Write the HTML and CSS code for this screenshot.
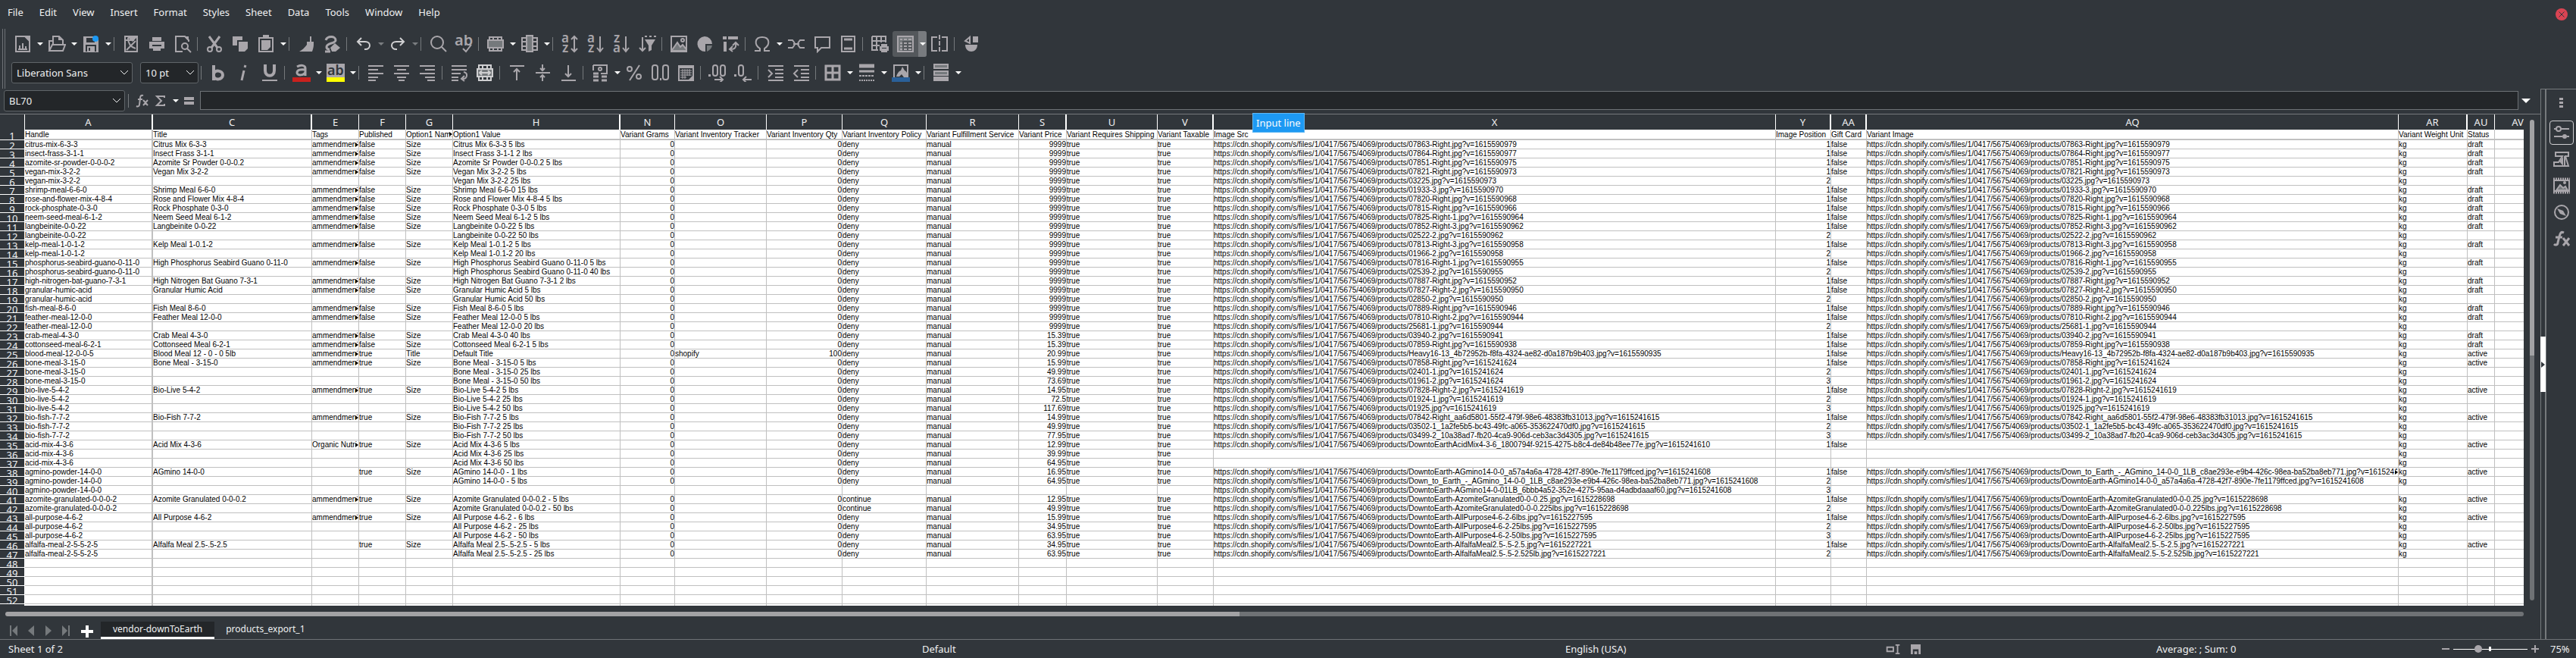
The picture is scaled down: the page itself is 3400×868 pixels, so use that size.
FILE: index.html
```html
<!DOCTYPE html>
<html lang="en">
<head>
<meta charset="utf-8">
<title>Spreadsheet</title>
<link rel="stylesheet" href="styles.css">
</head>
<body>
<div class="app">
  <header class="menubar">
    <nav class="menus" aria-label="Main menu">
      <button class="menu">File</button><button class="menu">Edit</button><button class="menu">View</button><button class="menu">Insert</button><button class="menu">Format</button><button class="menu">Styles</button><button class="menu">Sheet</button><button class="menu">Data</button><button class="menu">Tools</button><button class="menu">Window</button><button class="menu">Help</button>
    </nav>
    <button class="close" aria-label="Close"><svg viewBox="0 0 16 16"><path d="M4.500 4.500l7 7M11.500 4.500l-7 7"/></svg></button>
  </header>

  <section class="toolbars">
    <div class="grip"></div>
    <div class="bars">
      <div class="bar" role="toolbar" aria-label="Standard">
        <button class="tool" aria-label="New"><svg viewBox="0 0 24 24"><path d="M3 2h12l6 6v14H3z"/><path d="M14 1h8v8z" class="f"/><path d="M8 19v-5M12 19v-8M16 19v-4" /><path d="M6 19h12"/></svg></button>
        <button class="drop" aria-label="New options"></button>
        <button class="tool" aria-label="Open"><svg viewBox="0 0 24 24"><path d="M2 20V8h4M7 13V2h8l5 5v6"/><path d="M2 21l4-8h17l-3 8z"/><path d="M14 2h1l5 5h-6z" class="f"/></svg></button>
        <button class="drop" aria-label="Open options"></button>
        <button class="tool" aria-label="Save"><svg viewBox="0 0 24 24"><path class="f" d="M2 2h16l4 4v17H2z"/><path class="bg" d="M6 4h11v6H6zM5 13h14v9H5z"/><path class="f" d="M7 15h10v7H7z"/><path class="bg" d="M9 17h2v4H9z"/><circle cx="18" cy="5" r="4" fill="#1d99f3" stroke="none"/></svg></button>
        <button class="drop" aria-label="Save options"></button>
        <span class="sep"></span>
        <button class="tool" aria-label="Export as PDF"><svg viewBox="0 0 24 24"><path d="M4 2h16v20H4zM5 7h11M8 4c0 8 3 12 10 14M18 8L6 20"/><path class="f" d="M7 3h13L14 9z"/></svg></button>
        <button class="tool" aria-label="Print"><svg viewBox="0 0 24 24"><path class="f" d="M6 3h12v5H6zM2 9h20v9H2z"/><path class="bg" d="M6 13h12v2H6z"/><path class="f" d="M7 15h10v6H7z"/></svg></button>
        <button class="tool" aria-label="Print preview"><svg viewBox="0 0 24 24"><path d="M20 9V7l-5-5H3v20h9"/><path class="f" d="M14 2h6v6z"/><circle cx="15" cy="15" r="4"/><path d="M18 18l5 5"/></svg></button>
        <span class="sep"></span>
        <button class="tool" aria-label="Cut"><svg viewBox="0 0 24 24"><path d="M5 2l11 15M19 2L8 17" stroke-width="3"/><circle cx="6" cy="19" r="3"/><circle cx="18" cy="19" r="3"/></svg></button>
        <button class="tool" aria-label="Copy"><svg viewBox="0 0 24 24"><path class="f" d="M2 2h13v5H8v7H2z"/><path class="f" d="M10 9h12v9l-4 4h-8z"/></svg></button>
        <button class="tool" aria-label="Paste"><svg viewBox="0 0 24 24"><path d="M3 4h18v18H3z"/><path class="f" d="M8 0h8v5H8zM6 7h12v9l-4 4H6z"/></svg></button>
        <button class="drop" aria-label="Paste options"></button>
        <span class="sep"></span>
        <button class="tool" aria-label="Clone formatting"><svg viewBox="0 0 24 24"><path d="M18 2v8"/><path class="f" d="M13 9h9v4c0 3-1 6-2 9H3c4-2 7-5 10-9z"/></svg></button>
        <button class="tool" aria-label="Clear formatting"><svg viewBox="0 0 24 24"><path d="M4 7c2-6 13-6 13 0 0 5-12 3-12 9 0 2 2 3 4 3M3 22h7" stroke-width="3"/><path class="f" d="M10 17l6-6 7 6-6 5h-5z"/></svg></button>
        <span class="sep"></span>
        <button class="tool lit" aria-label="Undo"><svg viewBox="0 0 24 24"><path d="M9 4L4 9l5 5M4 9h10c8 0 8 10 0 10h-1"/></svg></button>
        <button class="drop dim" aria-label="Undo options"></button>
        <button class="tool lit" aria-label="Redo"><svg viewBox="0 0 24 24"><path d="M15 4l5 5-5 5M20 9H10c-8 0-8 10 0 10h1"/></svg></button>
        <button class="drop dim" aria-label="Redo options"></button>
        <span class="sep"></span>
        <button class="tool" aria-label="Find and replace"><svg viewBox="0 0 24 24"><circle cx="11" cy="10" r="8"/><path d="M17 16l6 6"/></svg></button>
        <button class="tool" aria-label="Spelling"><svg viewBox="0 0 24 24"><text x="0" y="14" font-size="20">ab</text><path d="M11 18l4 4 7-9"/></svg></button>
        <span class="sep"></span>
        <button class="tool" aria-label="Rows"><svg viewBox="0 0 24 24"><path d="M4 3h16v18H4zM9 3v18M15 3v18"/><path class="h" d="M2 7h20v10H2z"/></svg></button>
        <button class="drop" aria-label="Row options"></button>
        <button class="tool" aria-label="Columns"><svg viewBox="0 0 24 24"><path d="M2 4h20v16H2zM2 9h20M2 15h20"/><path class="h" d="M8 1h8v21H8z"/></svg></button>
        <button class="drop" aria-label="Column options"></button>
        <span class="sep"></span>
        <button class="tool" aria-label="Sort"><svg viewBox="0 0 24 24"><text x="1" y="10" font-size="17">a</text><text x="2" y="23" font-size="17">z</text><path d="M18 2v20M14 6l4-4 4 4M14 18l4 4 4-4"/></svg></button>
        <button class="tool" aria-label="Sort ascending"><svg viewBox="0 0 24 24"><text x="1" y="10" font-size="17">a</text><text x="2" y="23" font-size="17">z</text><path d="M18 2v20M14 17l4 5 4-5"/></svg></button>
        <button class="tool" aria-label="Sort descending"><svg viewBox="0 0 24 24"><text x="2" y="10" font-size="17">z</text><text x="1" y="23" font-size="17">a</text><path d="M18 2v20M14 17l4 5 4-5"/></svg></button>
        <button class="tool" aria-label="AutoFilter"><svg viewBox="0 0 24 24"><path d="M6 3v18M2 17l4 4 4-4"/><path class="f" d="M9 6h14l-5 8v6l-4 2v-8z"/><path d="M9 2h3M15 2h3M21 2h3"/></svg></button>
        <span class="sep"></span>
        <button class="tool" aria-label="Insert image"><svg viewBox="0 0 24 24"><path d="M2 2h20v20H2z"/><path class="h" d="M3 20l7-10 4 6 3-3 5 6v2H3z"/><circle cx="17" cy="7" r="2"/></svg></button>
        <button class="tool" aria-label="Insert chart"><svg viewBox="0 0 24 24"><path class="f" d="M12 2a10 10 0 0 1 10 10H13v10A10 10 0 1 1 12 2z"/><path class="h" d="M15 14h7c-1 4-3 6-7 8z" stroke="none"/></svg></button>
        <button class="tool" aria-label="Pivot table"><svg viewBox="0 0 24 24"><path class="f" d="M2 2h5v4H2zM9 2h13v4H9zM3 9h4v13H3z"/><path d="M19 10c1 7-1 9-7 9M15 14l4-4 4 4M15 15l-4 4 4 3"/></svg></button>
        <span class="sep"></span>
        <button class="tool" aria-label="Special character"><svg viewBox="0 0 24 24"><path d="M2 21h7v-3C1 13 2 3 12 3s11 10 3 15v3h7"/></svg></button>
        <button class="drop" aria-label="Character options"></button>
        <button class="tool" aria-label="Hyperlink"><svg viewBox="0 0 24 24"><path d="M1 7h6l3 4M1 17h6l3-4M23 7h-6l-3 4M23 17h-6l-3-4M8 12h8"/></svg></button>
        <button class="tool" aria-label="Comment"><svg viewBox="0 0 24 24"><path d="M3 3h19v14H11l-5 5v-5H3z"/></svg></button>
        <button class="tool" aria-label="Headers and footers"><svg viewBox="0 0 24 24"><path d="M4 2h17v20H4z"/><path d="M7 6h11M7 18h11" stroke-width="3"/></svg></button>
        <span class="sep"></span>
        <button class="tool" aria-label="Print area"><svg viewBox="0 0 24 24"><path d="M2 2h18v8M2 2v18h8M2 8h18M2 14h10M8 2v18M14 2v8"/><path class="f" d="M14 12h8v3h2v6h-2v2h-8v-2h-2v-6h2z"/><path class="bg" d="M15 17h6v1h-6z"/></svg></button>
        <span class="split on">
          <button class="tool" aria-label="Freeze rows and columns" aria-pressed="true"><svg viewBox="0 0 24 24"><path d="M2 2h20v20H2z" /><path class="h" d="M3 3h18v5H3zM3 8h5v13H3z" stroke="none"/><path d="M5 6h3M10 6h4M16 6h4M5 11h3M10 11h4M16 11h4M5 15h3M10 15h4M16 15h4M5 19h3M10 19h4M16 19h4"/></svg></button>
          <button class="drop" aria-label="Freeze options"></button>
        </span>
        <button class="tool" aria-label="Split window"><svg viewBox="0 0 24 24"><path d="M9 3H2v18h7M15 3h7v18h-7"/><path d="M12 0v24" stroke-dasharray="6 2"/></svg></button>
        <span class="sep"></span>
        <button class="tool" aria-label="Show draw functions"><svg viewBox="0 0 24 24"><path d="M4 8l6-5v8z"/><path class="f" d="M14 2h7v8h-7zM4 13h16c0 12-16 12-16 0z"/></svg></button>
      </div>

      <div class="bar" role="toolbar" aria-label="Formatting">
        <span class="combo font"><select aria-label="Font name"><option>Liberation Sans</option></select><svg viewBox="0 0 12 8"><path d="M1 1l5 5 5-5"/></svg></span>
        <span class="combo size"><select aria-label="Font size"><option>10 pt</option></select><svg viewBox="0 0 12 8"><path d="M1 1l5 5 5-5"/></svg></span>
        <span class="sep"></span>
        <button class="tool" aria-label="Bold"><svg viewBox="0 0 24 24"><path d="M6 2v20M6 14c1-7 12-5 12 1s-11 8-12 1" stroke-width="4"/></svg></button>
        <button class="tool" aria-label="Italic"><svg viewBox="0 0 24 24"><path d="M12 9l-3 13M14 2l-1 3" stroke-width="3"/></svg></button>
        <button class="tool" aria-label="Underline"><svg viewBox="0 0 24 24"><path d="M6 1v8c0 9 12 9 12 0V1" stroke-width="4"/><path d="M2 22h20"/></svg></button>
        <span class="sep"></span>
        <button class="tool" aria-label="Font colour"><svg viewBox="0 0 24 24"><path d="M6 4c5-3 11-2 11 2v10M17 8c-6-1-11 0-11 4 0 4 9 4 11-1" stroke-width="3"/><path fill="#c9211e" stroke="none" d="M0 18h24v6H0z"/></svg></button>
        <button class="drop" aria-label="Font colour options"></button>
        <button class="tool" aria-label="Highlighting"><svg viewBox="0 0 24 24"><path class="f" d="M0 0h24v18H0z"/><text x="1" y="15" font-size="18" class="ink">ab</text><path fill="#ffff00" stroke="none" d="M0 18h24v6H0z"/></svg></button>
        <button class="drop" aria-label="Highlighting options"></button>
        <span class="sep"></span>
        <button class="tool" aria-label="Align left"><svg viewBox="0 0 24 24"><path d="M2 3h20M2 8h13M2 13h20M2 18h13M2 22h10" /></svg></button>
        <button class="tool" aria-label="Align centre"><svg viewBox="0 0 24 24"><path d="M2 3h20M6 8h12M2 13h20M6 18h12M8 22h8"/></svg></button>
        <button class="tool" aria-label="Align right"><svg viewBox="0 0 24 24"><path d="M2 3h20M9 8h13M2 13h20M9 18h13M12 22h10"/></svg></button>
        <span class="sep"></span>
        <button class="tool" aria-label="Wrap text"><svg viewBox="0 0 24 24"><path d="M2 3h20M2 8h20M2 13h12M2 18h9M2 22h9M18 11c6 1 5 9-1 9M19 16l-4 4 4 3"/></svg></button>
        <button class="tool lit" aria-label="Merge cells"><svg viewBox="0 0 24 24"><path d="M4 2h16v20H4zM9 2v20M15 2v20"/><path class="h" d="M2 7h20v10H2z"/><path d="M5 12h14M8 9l-3 3 3 3M16 9l3 3-3 3"/></svg></button>
        <span class="sep"></span>
        <button class="tool" aria-label="Align top"><svg viewBox="0 0 24 24"><path d="M3 3h19M12 22V8M8 11l4-4 4 4"/></svg></button>
        <button class="tool" aria-label="Centre vertically"><svg viewBox="0 0 24 24"><path d="M3 12h19M12 1v8M9 6l3 3 3-3M12 23v-8M9 18l3-3 3 3"/></svg></button>
        <button class="tool" aria-label="Align bottom"><svg viewBox="0 0 24 24"><path d="M3 22h19M12 2v14M8 13l4 4 4-4"/></svg></button>
        <span class="sep"></span>
        <button class="tool" aria-label="Currency"><svg viewBox="0 0 24 24"><path d="M3 2h18v11h-8M3 2v7"/><circle cx="12" cy="7" r="2"/><path d="M3 13h7M3 17h7M3 22h7M14 17h7M14 22h7" stroke-width="3"/></svg></button>
        <button class="drop" aria-label="Currency options"></button>
        <button class="tool" aria-label="Percent"><svg viewBox="0 0 24 24"><path d="M19 2L6 22"/><circle cx="6" cy="7" r="3"/><circle cx="18" cy="17" r="3"/></svg></button>
        <button class="tool" aria-label="Number"><svg viewBox="0 0 24 24"><rect x="2" y="2" width="7" height="19" rx="3"/><rect x="16" y="2" width="7" height="19" rx="3"/><path d="M12 19h2v3h-2z" class="f"/></svg></button>
        <button class="tool" aria-label="Date"><svg viewBox="0 0 24 24"><path d="M3 3h19v19H3z"/><path class="f" d="M3 3h19v3H3z"/><path stroke-width="1" d="M5 9h15M5 12h15M5 15h15M5 18h8M8 7v13M11 7v13M14 7v9M17 7v9"/><path class="f" d="M15 22l7-7v7z"/></svg></button>
        <span class="sep"></span>
        <button class="tool" aria-label="Add decimal place"><svg viewBox="0 0 24 24"><path class="f" d="M0 14h3v3H0z"/><rect x="6" y="2" width="6" height="14" rx="3"/><rect x="16" y="2" width="6" height="14" rx="3"/><path d="M8 21h10M15 17l4 4-4 4"/></svg></button>
        <button class="tool" aria-label="Delete decimal place"><svg viewBox="0 0 24 24"><path class="f" d="M0 14h3v3H0z"/><rect x="6" y="2" width="6" height="14" rx="3"/><path d="M12 21h11M16 17l-4 4 4 4"/></svg></button>
        <span class="sep"></span>
        <button class="tool" aria-label="Increase indent"><svg viewBox="0 0 24 24"><path d="M3 3h20M12 8h11M12 13h11M12 18h11M3 22h20M3 8l5 5-5 5"/></svg></button>
        <button class="tool" aria-label="Decrease indent"><svg viewBox="0 0 24 24"><path d="M3 3h20M12 8h11M12 13h11M12 18h11M3 22h20M8 8l-5 5 5 5"/></svg></button>
        <span class="sep"></span>
        <button class="tool" aria-label="Borders"><svg viewBox="0 0 24 24"><path stroke-width="3" d="M3 3h18v18H3zM12 3v18M3 12h18"/></svg></button>
        <button class="drop" aria-label="Border options"></button>
        <button class="tool" aria-label="Border style"><svg viewBox="0 0 24 24"><path d="M2 3h20" stroke-width="5"/><path d="M2 10h20" stroke-width="3"/><path d="M2 16h20" stroke-dasharray="3 1"/><path d="M2 22h20" stroke-dasharray="2 1"/></svg></button>
        <button class="drop" aria-label="Border style options"></button>
        <button class="tool" aria-label="Border colour"><svg viewBox="0 0 24 24"><path d="M3 18V2h18v16"/><path class="f" d="M6 17c1-4 3-7 6-8l2-5 3 5c4 1 4 8 3 9h-4l-3-4-3 3z"/><path fill="#2a6099" stroke="none" d="M0 18h24v6H0z"/></svg></button>
        <button class="drop" aria-label="Border colour options"></button>
        <span class="sep"></span>
        <button class="tool" aria-label="Conditional formatting"><svg viewBox="0 0 24 24"><path class="h" d="M3 1h18v5H3zM3 10h18v5H3z"/><path class="f" d="M2 17h20v6H2z"/></svg></button>
        <button class="drop" aria-label="Conditional options"></button>
      </div>
    </div>
  </section>

  <div class="work">
    <main class="doc">
      <div class="formula">
        <span class="combo name"><input type="text" value="BL70" aria-label="Name box"><svg viewBox="0 0 12 8"><path d="M1 1l5 5 5-5"/></svg></span>
        <span class="sep"></span>
        <button class="mini" aria-label="Function wizard"><svg viewBox="0 0 18 18"><path d="M10 2C7 1 6 3 6 6L5 14c0 2-2 3-4 2M3 7h6M10 8l6 7M16 8l-6 7"/></svg></button>
        <button class="mini" aria-label="Select function"><svg viewBox="0 0 18 18"><path d="M14 5V3H4l6 6-6 6h10v-2"/></svg></button>
        <button class="drop" aria-label="Function options"></button>
        <button class="mini" aria-label="Formula"><svg viewBox="0 0 18 18"><path d="M2 6h13M2 12h13" stroke-width="4"/></svg></button>
        <input class="line" type="text" aria-label="Input line">
        <button class="expand" aria-label="Expand formula bar"></button>
        <span class="tip" role="tooltip">Input line</span>
      </div>
      <div class="view">
        <div class="cells"><table class="sheet" id="sheet"></table></div>
        <div class="vscroll"><div class="vthumb"></div></div>
      </div>
      <div class="hscroll"><div class="hthumb"></div></div>
      <div class="tabs">
        <button class="nav" aria-label="First sheet"><svg viewBox="0 0 12 16"><path d="M1 1h2v14H1zM11 1v14L4 8z"/></svg></button>
        <button class="nav" aria-label="Previous sheet"><svg viewBox="0 0 12 16"><path d="M10 1v14L2 8z"/></svg></button>
        <button class="nav" aria-label="Next sheet"><svg viewBox="0 0 12 16"><path d="M2 1v14l8-7z"/></svg></button>
        <button class="nav" aria-label="Last sheet"><svg viewBox="0 0 12 16"><path d="M9 1h2v14H9zM1 1v14l7-7z"/></svg></button>
        <button class="add" aria-label="Add sheet"><svg viewBox="0 0 16 16"><path d="M6 0h4v6h6v4h-6v6H6v-6H0V6h6z"/></svg></button>
        <button class="tab current">vendor-downToEarth</button>
        <button class="tab">products_export_1</button>
      </div>
    </main>
    <div class="divider"><button class="hide" aria-label="Hide sidebar"></button></div>
    <aside class="side">
      <button class="dots" aria-label="Sidebar settings"><svg viewBox="0 0 6 14"><path d="M0 0h5v3H0zM0 5h5v3H0zM0 10h5v3H0z"/></svg></button>
      <button class="deck picked" aria-label="Properties"><svg viewBox="0 0 24 24"><path d="M2 7h3M11 7h11M2 17h11M19 17h3"/><circle cx="8" cy="7" r="3"/><circle cx="16" cy="17" r="3" class="f"/></svg></button>
      <button class="deck" aria-label="Styles"><svg viewBox="0 0 24 24"><path d="M4 3h17v5h-4l4 13H2v-5h6L13 8H4z"/><path d="M16 8v12M2 16h6"/><path class="f" d="M9 15l5-6v12z"/></svg></button>
      <button class="deck" aria-label="Gallery"><svg viewBox="0 0 24 24"><path d="M1 3h22M1 21h22" stroke-dasharray="2 1" stroke-width="3"/><path d="M2 5h20v14H2z"/><path class="h" d="M5 18l5-7 4 4 3-2 3 5z"/><circle cx="16" cy="8" r="1"/></svg></button>
      <button class="deck" aria-label="Navigator"><svg viewBox="0 0 24 24"><circle cx="12" cy="12" r="9"/><path class="f" d="M6 7l8 3 4 7-8-3z"/></svg></button>
      <button class="deck" aria-label="Functions"><svg viewBox="0 0 24 24"><path d="M15 4c-4-2-5 1-6 5l-2 8c0 3-3 4-5 2M4 10h9M14 11l8 10M22 11l-8 10" stroke-width="3"/></svg></button>
    </aside>
  </div>

  <footer class="status">
    <span class="count">Sheet 1 of 2</span>
    <span class="style">Default</span>
    <span class="lang">English (USA)</span>
    <span class="modes">
      <svg viewBox="0 0 20 14"><path d="M1 4h9v6H1zM13 1h6M16 1v12M13 13h6"/></svg>
      <svg viewBox="0 0 14 14"><path class="f" d="M0 0h14v14H0z"/><path class="bg" d="M3 7h8v7H9v-4H5v4H3z"/></svg>
    </span>
    <span class="sum">Average: ; Sum: 0</span>
    <span class="zoom">
      <button class="step" aria-label="Zoom out"><svg viewBox="0 0 12 12"><path d="M1 6h10"/></svg></button>
      <input type="range" min="0" max="100" value="32" aria-label="Zoom">
      <button class="step" aria-label="Zoom in"><svg viewBox="0 0 12 12"><path d="M1 6h10M6 1v10"/></svg></button>
      <button class="percent">75%</button>
    </span>
  </footer>
</div>
<script src="sheet.js"></script>
</body>
</html>
```

FILE: styles.css
```css
* { box-sizing: border-box; }
html, body { height: 100%; margin: 0; }
body {
  background: #31363b;
  color: #eff0f1;
  font: 13px/18px "Noto Sans", sans-serif;
  overflow: hidden;
}
button, input, select { font: inherit; color: inherit; margin: 0; padding: 0; border: 0; background: none; }
svg { display: block; fill: none; stroke: currentColor; stroke-width: 2; }
svg .f { fill: currentColor; stroke: none; }
svg .h { fill: #75797c; }
svg .bg { fill: #31363b; stroke: none; }
svg text { fill: currentColor; stroke: none; font-family: "Noto Sans", sans-serif; font-weight: 600; }
svg .ink { fill: #31363b; }

.app { display: flex; flex-direction: column; height: 100vh; }

.menubar { display: flex; justify-content: space-between; align-items: flex-start; height: 38px; flex: none; }
.menus { display: flex; gap: 1px; height: 32px; }
.menu { padding: 0 10px; }
.close { width: 16px; height: 16px; margin: 11px 11px 0 0; border-radius: 50%; background: #da4453; color: #31363b; }
.close svg { stroke-width: 1; }

.toolbars { display: flex; flex: none; height: 79px; }
.grip { width: 4px; margin: 0 6px 0 3px; border: solid #6e7276; border-width: 0 1px; }
.bars { display: flex; flex-direction: column; gap: 4px; padding-top: 3px; }
.bar { display: flex; align-items: center; height: 34px; }
.tool { width: 34px; height: 34px; padding: 5px; color: #a9a6ab; flex: none; }
.tool.lit { color: #cfcfd1; }
.drop { display: flex; align-items: center; justify-content: center; width: 11px; height: 34px; flex: none; }
.drop::before { content: ""; border: solid transparent; border-width: 4px 4px 0; border-top-color: #fff; }
.drop.dim::before { border-top-color: #7b7e81; }
.sep { width: 1px; height: 18px; margin: 0 5px 0 2px; background: #75797c; flex: none; }
.split { display: flex; border-radius: 3px; background: #54585c; overflow: hidden; }
.split .drop { background: #787b7f; }

.combo { display: grid; align-items: center; flex: none; height: 28px; border: 1px solid #5f6468; border-radius: 3px; background: #232629; }
.combo > * { grid-area: 1 / 1; }
.combo select, .combo input { width: 100%; height: 26px; padding-left: 6px; appearance: none; outline: none; }
.combo svg { width: 12px; height: 8px; justify-self: end; margin-right: 4px; stroke-width: 1; pointer-events: none; }
.font { width: 160px; margin: 0 10px 0 2px; }
.size { width: 77px; margin-right: 1px; }
.name { width: 160px; }

.work { display: flex; flex: 1; min-height: 0; border-bottom: 1px solid #6e7276; }
.doc { display: flex; flex-direction: column; flex: 1; min-width: 0; }
.formula { position: relative; display: flex; align-items: center; height: 34px; flex: none; padding: 0 13px 2px 5px; border-bottom: 1px solid #75797c; }
.formula .sep { margin: 0 8px 0 4px; }
.mini { width: 20px; height: 20px; margin-right: 4px; padding: 1px; color: #a9a6ab; }
.formula .drop { margin-right: 3px; }
.line { flex: 1; min-width: 0; height: 25px; padding: 0 4px; border: 1px solid #6e7276; background: #232629; }
.expand { width: 16px; height: 24px; display: flex; align-items: center; justify-content: flex-end; }
.expand::before { content: ""; border: solid transparent; border-width: 6px 6px 0; border-top-color: #fff; }
.tip { position: absolute; z-index: 2; left: 1653px; top: 32px; height: 26px; padding: 3px 4px; border: 1px solid #61b8f3; background: #1d99f3; color: #fcfcfc; white-space: nowrap; }

.view { display: flex; flex: 1; min-height: 0; }
.cells { flex: 1; min-width: 0; overflow: hidden; background: #fff; }
.sheet { width: calc(100% + 23px); table-layout: fixed; border-collapse: separate; border-spacing: 0; color: #000; font: 10px/11px "Liberation Sans", sans-serif; }
.sheet th { padding: 0; background: #31363b; color: #eff0f1; font: 13px/18px "Noto Sans", sans-serif; overflow: hidden; text-align: center; }
.sheet thead th { height: 20px; border-right: 1px solid #fff; }
.sheet thead th.gap { border-right-width: 2px; }
.sheet tbody th { border: solid #fff; border-width: 0 1px 1px 0; }
.sheet .num { height: 11px; line-height: 15px; overflow: hidden; }
.sheet tr.head .num { height: 13px; line-height: 17px; }
.sheet td { position: relative; height: 12px; padding: 0; border: solid #c0c0c0; border-width: 0 1px 1px 0; white-space: nowrap; overflow: hidden; }
.sheet td.frozen { border-right-width: 2px; }
.sheet tr.head td { height: 14px; border-bottom-width: 2px; vertical-align: middle; }
.sheet td.right { text-align: right; }
.sheet td.more::after { content: ""; position: absolute; right: 0; top: 3px; border: solid transparent; border-width: 3px 0 3px 4px; border-left-color: #000; background: #fff; }

.vscroll { width: 22px; padding: 7px 8px; flex: none; }
.vthumb { height: 100%; border-radius: 3px; background: linear-gradient(#a2a2a4 0 49%, #6f7275 49%); }
.hscroll { height: 21px; padding: 8px 22px 7px 7px; flex: none; }
.hthumb { height: 6px; border-radius: 3px; background: linear-gradient(90deg, #a2a2a4 0 49%, #6f7275 49%); }

.tabs { display: flex; height: 23px; flex: none; padding-left: 12px; font-size: 12px; }
.nav { width: 23px; height: 23px; padding: 4px 11px 3px 0; color: #75797c; }
.nav svg { width: 12px; height: 16px; fill: currentColor; stroke: none; }
.add { width: 29px; height: 23px; padding: 3px 10px 0 3px; }
.add svg { width: 16px; height: 16px; fill: #fff; stroke: none; }
.tab { padding: 0 15px; line-height: 20px; border-bottom: 3px solid transparent; }
.tab.current { padding: 0 16px; background: #232629; border-bottom-color: #fff; }

.divider { display: flex; align-items: center; width: 8px; flex: none; border: solid #75797c; border-width: 1px 2px 0 1px; }
.hide { width: 7px; height: 73px; flex: none; margin: 0 0 0 -1px; background: #fff; display: flex; align-items: center; justify-content: center; }
.hide::before { content: ""; border: solid transparent; border-width: 4px 0 4px 5px; border-left-color: #31363b; }
.side { display: flex; flex-direction: column; align-items: center; width: 39px; flex: none; border-top: 1px solid #75797c; padding: 7px 0 0; }
.dots { width: 32px; height: 22px; padding: 3px 13px; color: #a9a6ab; }
.dots svg { width: 6px; height: 14px; fill: currentColor; stroke: none; }
.deck { width: 32px; height: 32px; padding: 4px; margin-top: 3px; border-radius: 4px; color: #a9a6ab; flex: none; }
.deck svg { width: 24px; height: 24px; }
.deck.picked { margin-top: 12px; padding: 3px; border: 1px solid #cfcfd1; }

.status { display: grid; grid-template-columns: 1206fr 849fr 423fr 357fr 376fr 178fr; align-items: center; height: 24px; flex: none; padding-left: 11px; white-space: nowrap; }
.modes { display: flex; gap: 13px; color: #a9a6ab; }
.modes svg { width: 20px; height: 13px; }
.modes svg + svg { width: 13px; }
.zoom { display: flex; align-items: center; }
.step { width: 12px; height: 12px; color: #a9a6ab; }
.zoom input { width: 98px; height: 12px; margin: 0 4px; appearance: none; background: linear-gradient(#fff, #fff) 49% 50% / 3px 6px no-repeat, linear-gradient(#fff, #fff) 0 50% / 100% 1px no-repeat; }
.zoom input::-webkit-slider-thumb { appearance: none; width: 10px; height: 10px; border-radius: 50%; background: #a9a6ab; }
.percent { margin-left: 14px; }
```

FILE: sheet.js
```js
const columns = [
  ["A", 169, 1], ["C", 210, 1], ["E", 62], ["F", 62], ["G", 62], ["H", 221, 1], ["N", 72], ["O", 121],
  ["P", 100], ["Q", 111], ["R", 122], ["S", 63, 1], ["U", 120], ["V", 74, 1], ["X", 742], ["Y", 73, 1],
  ["AA", 47, 1], ["AQ", 702], ["AR", 91, 1], ["AU", 36], ["AV", 0]
];
const labels = ["Handle", "Title", "Tags", "Published", "Option1 Name", "Option1 Value", "Variant Grams",
  "Variant Inventory Tracker", "Variant Inventory Qty", "Variant Inventory Policy", "Variant Fulfillment Service",
  "Variant Price", "Variant Requires Shipping", "Variant Taxable", "Image Src", "Image Position", "Gift Card",
  "Variant Image", "Variant Weight Unit", "Status", ""];

const azomite = "DowntoEarth-AzomiteGranulated0-0-0.2";
const down = "Down_to_Earth_-_AGmino_14-0-0_1LB_c8ae293e-e9b4-426c-98ea-ba52ba8eb771";
const agmino = "DowntoEarth-AGmino14-0-0_a57a4a6a-4728-42f7-890e-7fe1179ffced";

// handle, title, option value, price, image, version, position, variant image (when it differs)
const products = [
  ["citrus-mix-6-3-3", "Citrus Mix 6-3-3", "Citrus Mix 6-3-3 5 lbs", 9999, "07863-Right", 1615590979, 1],
  ["insect-frass-3-1-1", "Insect Frass 3-1-1", "Insect Frass 3-1-1 2 lbs", 9999, "07864-Right", 1615590977, 1],
  ["azomite-sr-powder-0-0-0-2", "Azomite Sr Powder 0-0-0.2", "Azomite Sr Powder 0-0-0.2 5 lbs", 9999, "07851-Right", 1615590975, 1],
  ["vegan-mix-3-2-2", "Vegan Mix 3-2-2", "Vegan Mix 3-2-2 5 lbs", 9999, "07821-Right", 1615590973, 1],
  ["vegan-mix-3-2-2", "", "Vegan Mix 3-2-2 25 lbs", 9999, "03225", 1615590973, 2],
  ["shrimp-meal-6-6-0", "Shrimp Meal 6-6-0", "Shrimp Meal 6-6-0 15 lbs", 9999, "01933-3", 1615590970, 1],
  ["rose-and-flower-mix-4-8-4", "Rose and Flower Mix 4-8-4", "Rose and Flower Mix 4-8-4 5 lbs", 9999, "07820-Right", 1615590968, 1],
  ["rock-phosphate-0-3-0", "Rock Phosphate 0-3-0", "Rock Phosphate 0-3-0 5 lbs", 9999, "07815-Right", 1615590966, 1],
  ["neem-seed-meal-6-1-2", "Neem Seed Meal 6-1-2", "Neem Seed Meal 6-1-2 5 lbs", 9999, "07825-Right-1", 1615590964, 1],
  ["langbeinite-0-0-22", "Langbeinite 0-0-22", "Langbeinite 0-0-22 5 lbs", 9999, "07852-Right-3", 1615590962, 1],
  ["langbeinite-0-0-22", "", "Langbeinite 0-0-22 50 lbs", 9999, "02522-2", 1615590962, 2],
  ["kelp-meal-1-0-1-2", "Kelp Meal 1-0.1-2", "Kelp Meal 1-0.1-2 5 lbs", 9999, "07813-Right-3", 1615590958, 1],
  ["kelp-meal-1-0-1-2", "", "Kelp Meal 1-0.1-2 20 lbs", 9999, "01966-2", 1615590958, 2],
  ["phosphorus-seabird-guano-0-11-0", "High Phosphorus Seabird Guano 0-11-0", "High Phosphorus Seabird Guano 0-11-0 5 lbs", 9999, "07816-Right-1", 1615590955, 1],
  ["phosphorus-seabird-guano-0-11-0", "", "High Phosphorus Seabird Guano 0-11-0 40 lbs", 9999, "02539-2", 1615590955, 2],
  ["high-nitrogen-bat-guano-7-3-1", "High Nitrogen Bat Guano 7-3-1", "High Nitrogen Bat Guano 7-3-1 2 lbs", 9999, "07887-Right", 1615590952, 1],
  ["granular-humic-acid", "Granular Humic Acid", "Granular Humic Acid 5 lbs", 9999, "07827-Right-2", 1615590950, 1],
  ["granular-humic-acid", "", "Granular Humic Acid 50 lbs", 9999, "02850-2", 1615590950, 2],
  ["fish-meal-8-6-0", "Fish Meal 8-6-0", "Fish Meal 8-6-0 5 lbs", 9999, "07889-Right", 1615590946, 1],
  ["feather-meal-12-0-0", "Feather Meal 12-0-0", "Feather Meal 12-0-0 5 lbs", 9999, "07810-Right-2", 1615590944, 1],
  ["feather-meal-12-0-0", "", "Feather Meal 12-0-0 20 lbs", 9999, "25681-1", 1615590944, 2],
  ["crab-meal-4-3-0", "Crab Meal 4-3-0", "Crab Meal 4-3-0 40 lbs", 15.39, "03940-2", 1615590941, 1],
  ["cottonseed-meal-6-2-1", "Cottonseed Meal 6-2-1", "Cottonseed Meal 6-2-1 5 lbs", 15.39, "07859-Right", 1615590938, 1],
  ["blood-meal-12-0-0-5", "Blood Meal 12 - 0 - 0 5lb", "Default Title", 20.99, "Heavy16-13_4b72952b-f8fa-4324-ae82-d0a187b9b403", 1615590935, 1],
  ["bone-meal-3-15-0", "Bone Meal - 3-15-0", "Bone Meal - 3-15-0 5 lbs", 15.99, "07858-Right", 1615241624, 1],
  ["bone-meal-3-15-0", "", "Bone Meal - 3-15-0 25 lbs", 49.99, "02401-1", 1615241624, 2],
  ["bone-meal-3-15-0", "", "Bone Meal - 3-15-0 50 lbs", 73.69, "01961-2", 1615241624, 3],
  ["bio-live-5-4-2", "Bio-Live 5-4-2", "Bio-Live 5-4-2 5 lbs", 14.95, "07828-Right-2", 1615241619, 1],
  ["bio-live-5-4-2", "", "Bio-Live 5-4-2 25 lbs", 72.5, "01924-1", 1615241619, 2],
  ["bio-live-5-4-2", "", "Bio-Live 5-4-2 50 lbs", 117.69, "01925", 1615241619, 3],
  ["bio-fish-7-7-2", "Bio-Fish 7-7-2", "Bio-Fish 7-7-2 5 lbs", 14.99, "07842-Right_aa6d5801-55f2-479f-98e6-48383fb31013", 1615241615, 1],
  ["bio-fish-7-7-2", "", "Bio-Fish 7-7-2 25 lbs", 49.99, "03502-1_1a2fe5b5-bc43-49fc-a065-353622470df0", 1615241615, 2],
  ["bio-fish-7-7-2", "", "Bio-Fish 7-7-2 50 lbs", 77.95, "03499-2_10a38ad7-fb20-4ca9-906d-ceb3ac3d4305", 1615241615, 3],
  ["acid-mix-4-3-6", "Acid Mix 4-3-6", "Acid Mix 4-3-6 5 lbs", 12.99, "DowntoEarthAcidMix4-3-6_1800794f-9215-4275-b8c4-de84b48ee77e", 1615241610, 1, ""],
  ["acid-mix-4-3-6", "", "Acid Mix 4-3-6 25 lbs", 39.99, "", 0, ""],
  ["acid-mix-4-3-6", "", "Acid Mix 4-3-6 50 lbs", 64.95, "", 0, ""],
  ["agmino-powder-14-0-0", "AGmino 14-0-0", "AGmino 14-0-0 - 1 lbs", 16.95, agmino, 1615241608, 1, down],
  ["agmino-powder-14-0-0", "", "AGmino 14-0-0 - 5 lbs", 64.95, down, 1615241608, 2, agmino],
  ["agmino-powder-14-0-0", "", "", "", "DowntoEarth-AGmino14-0-01LB_6bbb4a52-352e-4275-95aa-d4adbdaaaf60", 1615241608, 3, ""],
  ["azomite-granulated-0-0-0-2", "Azomite Granulated 0-0-0.2", "Azomite Granulated 0-0-0.2 - 5 lbs", 12.95, azomite + "5", 1615228698, 1],
  ["azomite-granulated-0-0-0-2", "", "Azomite Granulated 0-0-0.2 - 50 lbs", 49.99, azomite + "25lbs", 1615228698, 2],
  ["all-purpose-4-6-2", "All Purpose 4-6-2", "All Purpose 4-6-2 - 6 lbs", 15.99, "DowntoEarth-AllPurpose4-6-2-6lbs", 1615227595, 1],
  ["all-purpose-4-6-2", "", "All Purpose 4-6-2 - 25 lbs", 34.95, "DowntoEarth-AllPurpose4-6-2-25lbs", 1615227595, 2, "DowntoEarth-AllPurpose4-6-2-50lbs"],
  ["all-purpose-4-6-2", "", "All Purpose 4-6-2 - 50 lbs", 63.95, "DowntoEarth-AllPurpose4-6-2-50lbs", 1615227595, 3, "DowntoEarth-AllPurpose4-6-2-25lbs"],
  ["alfalfa-meal-2-5-5-2-5", "Alfalfa Meal 2.5-.5-2.5", "Alfalfa Meal 2.5-.5-2.5 - 5 lbs", 34.95, "DowntoEarth-AlfalfaMeal2.5-.5-2.5", 1615227221, 1],
  ["alfalfa-meal-2-5-5-2-5", "", "Alfalfa Meal 2.5-.5-2.5 - 25 lbs", 63.95, "DowntoEarth-AlfalfaMeal2.5-.5-2.525lb", 1615227221, 2]
];

const url = (name, version) =>
  name ? `https://cdn.shopify.com/s/files/1/0417/5675/4069/products/${name}.jpg?v=${version}` : "";

function cellsFor(product, row) {
  const [handle, title, value, price, image, version, position, variant = image] = product;
  const sold = value !== "";
  const tags = !title || row === 38 || row === 46 ? "" : row === 35 ? "Organic Nutrients" : "ammendments";
  return [
    handle, title, tags,
    title ? (row < 25 ? "false" : "true") : "",
    title ? (row === 25 ? "Title" : "Size") : "",
    value,
    sold ? "0" : "", row === 25 ? "shopify" : "", sold ? (row === 25 ? "100" : "0") : "",
    sold ? (row === 41 || row === 42 ? "continue" : "deny") : "",
    sold ? "manual" : "", String(price), sold ? "true" : "", sold ? "true" : "",
    url(image, version), String(position), title ? "false" : "",
    url(variant, version), sold ? "kg" : "",
    title ? (row < 25 ? "draft" : "active") : "", ""
  ];
}

const numeric = new Set([6, 8, 11, 15]);
const table = document.getElementById("sheet");

const group = document.createElement("colgroup");
[33, ...columns.map(c => c[1])].forEach(width => {
  const col = document.createElement("col");
  if (width) col.style.width = width + "px";
  group.append(col);
});
table.append(group);

const top1 = table.createTHead().insertRow();
top1.append(document.createElement("th"));
columns.forEach(([name, , gap]) => {
  const th = document.createElement("th");
  th.scope = "col";
  th.textContent = name;
  if (gap) th.className = "gap";
  top1.append(th);
});

const body = table.createTBody();
for (let row = 1; row <= 53; row++) {
  const tr = body.insertRow();
  if (row === 1) tr.className = "head";
  const th = document.createElement("th");
  th.scope = "row";
  const num = document.createElement("div");
  num.className = "num";
  num.textContent = row;
  th.append(num);
  tr.append(th);
  const product = products[row - 2];
  const values = row === 1 ? labels : product ? cellsFor(product, row) : labels.map(() => "");
  values.forEach((text, i) => {
    const td = tr.insertCell();
    td.textContent = text;
    if (i === 0) td.classList.add("frozen");
    if (row > 1 && numeric.has(i)) td.classList.add("right");
    if (td.scrollWidth > td.clientWidth + 1) td.classList.add("more");
  });
}
```
